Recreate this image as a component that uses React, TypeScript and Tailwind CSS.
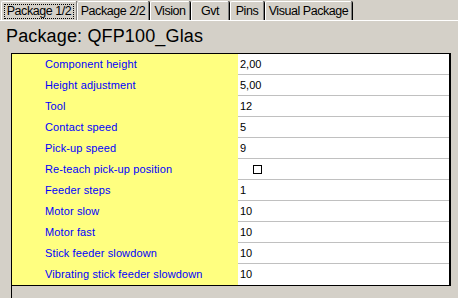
const tabs = [
  { label: 'Package 1/2', w: 'w-[76px]', ml: 'ml-[1px]', active: true },
  { label: 'Package 2/2', w: 'w-[72px]', ml: 'ml-[0px]', active: false },
  { label: 'Vision', w: 'w-[40px]', ml: 'ml-[1px]', active: false },
  { label: 'Gvt', w: 'w-[38px]', ml: 'ml-[1px]', active: false },
  { label: 'Pins', w: 'w-[34px]', ml: 'ml-[1px]', active: false },
  { label: 'Visual Package', w: 'w-[87px]', ml: 'ml-[1px]', active: false },
];

const rows: { label: string; value: string | null }[] = [
  { label: 'Component height', value: '2,00' },
  { label: 'Height adjustment', value: '5,00' },
  { label: 'Tool', value: '12' },
  { label: 'Contact speed', value: '5' },
  { label: 'Pick-up speed', value: '9' },
  { label: 'Re-teach pick-up position', value: null },
  { label: 'Feeder steps', value: '1' },
  { label: 'Motor slow', value: '10' },
  { label: 'Motor fast', value: '10' },
  { label: 'Stick feeder slowdown', value: '10' },
  { label: 'Vibrating stick feeder slowdown', value: '10' },
];

export default function App() {
  return (
    <div className="w-[458px] h-[298px] overflow-hidden bg-[#d4d0c8] flex flex-col font-['Liberation_Sans',Arial,sans-serif]">
      {/* tab strip */}
      <div className="h-[21px] flex items-end border-b border-white shrink-0">
        {tabs.map((t) => (
          <div
            key={t.label}
            className={`${t.w} ${t.ml} h-[19px] border-t border-l border-white border-r border-r-[#808080] shadow-[1px_0_0_#000] rounded-t-[2px] flex items-center justify-center text-[12.5px] tracking-[-0.45px] text-black leading-none`}
          >
            {t.active ? (
              <span className="w-[70px] h-[15px] flex items-center justify-center border border-dotted border-black">
                {t.label}
              </span>
            ) : (
              <span>{t.label}</span>
            )}
          </div>
        ))}
      </div>

      {/* title */}
      <div className="h-[32px] shrink-0 pl-[6px] pt-[4px] text-[18px] tracking-[0.15px] leading-[22px] text-black">
        Package: QFP100_Glas
      </div>

      {/* property grid */}
      <div className="ml-[11px] flex-1 border-l border-black">
        <div className="w-[439px] border-t border-b border-r-2 border-black">
          {rows.map((r, i) => (
            <div key={r.label} className="flex h-[21px]">
              <div className="w-[226px] bg-[#ffff80] pl-[33px] flex items-center text-[11px] tracking-[0.12px] text-[#0000ff]">
                {r.label}
              </div>
              <div
                className={`w-[211px] bg-white pl-[2px] flex items-center text-[11px] text-black ${
                  i < rows.length - 1 ? 'border-b border-[#c0c0c0]' : ''
                }`}
              >
                {r.value === null ? (
                  <span className="ml-[13px] w-[9px] h-[9px] border border-black bg-white" />
                ) : (
                  r.value
                )}
              </div>
            </div>
          ))}
        </div>
      </div>
    </div>
  );
}
